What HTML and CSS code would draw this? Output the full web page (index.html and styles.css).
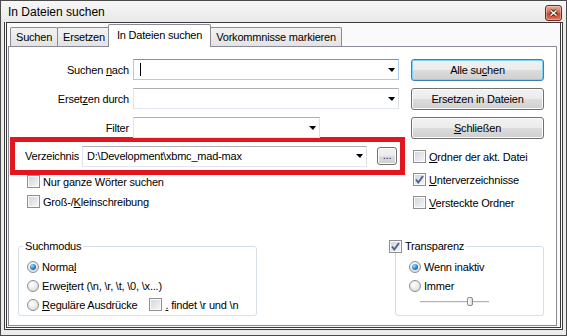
FILE: index.html
```html
<!DOCTYPE html>
<html lang="de">
<head>
    <meta charset="UTF-8">
    <title>In Dateien suchen</title>
    <link rel="stylesheet" href="styles.css">
</head>
<body>
    <div class="window">
        <div class="titlebar">
            <span class="title">In Dateien suchen</span>
            <span class="close">
                <svg width="9" height="8" viewBox="0 0 9 8">
                    <path d="M1.5 1.5 L7.5 6.5 M7.5 1.5 L1.5 6.5" stroke="#4a1d12" stroke-width="3.4"/>
                    <path d="M1.5 1.5 L7.5 6.5 M7.5 1.5 L1.5 6.5" stroke="#fff" stroke-width="1.6"/>
                </svg>
            </span>
        </div>
        <div class="client">
            <div class="tabs">
                <div class="tab">Suchen</div>
                <div class="tab">Ersetzen</div>
                <div class="tab active">In Dateien suchen</div>
                <div class="tab">Vorkommnisse markieren</div>
            </div>
            <div class="panel">
                <div class="top">
                    <div class="left">
                        <div class="fields">
                            <label>Suchen <u>n</u>ach</label>
                            <div class="combo focus"><span class="caret"></span><span class="arrow"></span></div>
                            <label>Erset<u>z</u>en durch</label>
                            <div class="combo"><span class="arrow"></span></div>
                            <label>Filter</label>
                            <div class="combo short"><span class="arrow"></span></div>
                        </div>
                        <!-- rote Markierung -->
                        <div class="marked">
                            <label class="dir-label">Verzeichnis</label>
                            <div class="combo dir"><span>D:\Development\xbmc_mad-max</span><span class="arrow"></span></div>
                            <span class="btn dots">...</span>
                        </div>
                        <div class="checks">
                            <div class="check-row"><span class="box"></span><span>Nur <u>g</u>anze Wörter suchen</span></div>
                            <div class="check-row"><span class="box"></span><span>Groß-/<u>K</u>leinschreibung</span></div>
                        </div>
                    </div>
                    <div class="right">
                        <div class="buttons">
                            <span class="btn default"><span>Alle su<u>c</u>hen</span></span>
                            <span class="btn">Ersetzen in Dateien</span>
                            <span class="btn"><span><u>S</u>chließen</span></span>
                        </div>
                        <div class="checks">
                            <div class="check-row"><span class="box"></span><span><u>O</u>rdner der akt. Datei</span></div>
                            <div class="check-row"><span class="box checked"><svg width="11" height="11" viewBox="0 0 11 11"><path d="M2 5.5 L4.3 8.5 L9 2" fill="none" stroke="#4c5f93" stroke-width="1.9"/></svg></span><span><u>U</u>nterverzeichnisse</span></div>
                            <div class="check-row"><span class="box"></span><span><u>V</u>ersteckte Ordner</span></div>
                        </div>
                    </div>
                </div>
                <div class="groups">
                    <fieldset class="group mode">
                        <legend>Suchmodus</legend>
                        <div class="opt"><span class="radio on"></span><span>Norma<u>l</u></span></div>
                        <div class="opt"><span class="radio"></span><span>Erwe<u>i</u>tert (\n, \r, \t, \0, \x...)</span></div>
                        <div class="opt"><span class="radio"></span><span><u>R</u>eguläre Ausdrücke</span><span class="box dotall"></span><span><u>.</u> findet \r und \n</span></div>
                    </fieldset>
                    <fieldset class="group trans">
                        <legend><span class="box checked"><svg width="11" height="11" viewBox="0 0 11 11"><path d="M2 5.5 L4.3 8.5 L9 2" fill="none" stroke="#4c5f93" stroke-width="1.9"/></svg></span><span>Transparenz</span></legend>
                        <div class="opt"><span class="radio on"></span><span>Wenn inaktiv</span></div>
                        <div class="opt"><span class="radio"></span><span>Immer</span></div>
                        <div class="slider">
                            <span class="track" style="width: 47px;"></span>
                            <span class="thumb"></span>
                            <span class="track" style="width: 16px;"></span>
                        </div>
                    </fieldset>
                </div>
            </div>
        </div>
    </div>
</body>
</html>
```

FILE: styles.css
```css
* {
    box-sizing: border-box;
}

body {
    margin: 0;
    font-family: "Liberation Sans", Arial, sans-serif;
    font-size: 11px;
    letter-spacing: -0.2px;
    color: #000;
}

.window {
    width: 567px;
    height: 336px;
    border: 1px solid #4a4a4a;
    background: #ececec;
    display: flex;
    flex-direction: column;
}

/* Titelleiste */
.titlebar {
    height: 21px;
    display: flex;
    align-items: flex-start;
    background: linear-gradient(#f7f7f7, #e9e9e9);
}

.title {
    flex: 1;
    padding: 2px 0 0 7px;
    font-size: 12px;
    line-height: 19px;
    letter-spacing: 0;
}

.close {
    width: 17px;
    height: 16px;
    margin: 4px 4px 0 0;
    border: 1px solid #6b2a1e;
    border-radius: 3px;
    background: linear-gradient(#eba998, #d86e55 45%, #c7452a 55%, #d97a5c);
    box-shadow: inset 0 0 0 1px rgba(255, 255, 255, 0.35);
    display: flex;
    align-items: center;
    justify-content: center;
}

.client {
    flex: 1;
    margin: 0 3px 5px;
    border-top: 1px solid #3a3a3a;
    border-left: 3px double #3a3a3a;
    border-right: 3px double #3a3a3a;
    border-bottom: 3px double #3a3a3a;
    background: #fafafa;
    display: flex;
    flex-direction: column;
}

/* Reiter */
.tabs {
    height: 23px;
    display: flex;
    align-items: flex-end;
    padding-left: 3px;
}

.tab {
    height: 19px;
    line-height: 18px;
    padding: 0 5px;
    margin-right: -1px;
    border: 1px solid #898c95;
    border-bottom: none;
    border-radius: 2px 2px 0 0;
    background: linear-gradient(#f3f3f3, #e3e3e3);
}

.tab.active {
    height: 23px;
    line-height: 21px;
    margin: 0 -1px -1px -2px;
    padding: 0 8px;
    background: #fff;
    position: relative;
    z-index: 1;
}

.panel {
    flex: 1;
    margin: 0 3px 1px 1px;
    border: 1px solid #898c95;
    background: #fff;
    padding: 12px 0 9px 1px;
    display: flex;
    flex-direction: column;
}

.top {
    display: flex;
    gap: 6px;
}

.left {
    width: 395px;
}

.fields {
    display: grid;
    grid-template-columns: 119px 266px;
    column-gap: 4px;
    row-gap: 8px;
    align-items: center;
}

.fields label {
    text-align: right;
}

.combo {
    height: 21px;
    border: 1px solid;
    border-color: #abadb3 #dbdfe6 #e3e9ef #e2e3ea;
    background: #fff;
    display: flex;
    align-items: center;
    padding: 0 3px 0 4px;
    white-space: nowrap;
}

.combo.focus {
    border-color: #569de5 #a8cbef #a8cbef #a8cbef;
}

.combo.short {
    width: 187px;
}

.caret {
    width: 1px;
    height: 13px;
    margin-left: 2px;
    background: #000;
}

.arrow {
    margin-left: auto;
    width: 0;
    height: 0;
    border-top: 4px solid #000;
    border-left: 4px solid transparent;
    border-right: 3px solid transparent;
}

.marked {
    margin-top: -1px;
    height: 38px;
    border: 5px solid #e3161f;
    display: flex;
    align-items: center;
    padding: 0 2px 0 10px;
}

.dir-label {
    width: 57px;
    flex: none;
}

.combo.dir {
    width: 285px;
}

.checks {
    display: flex;
    flex-direction: column;
    gap: 7px;
    padding-left: 17px;
}

.check-row {
    height: 13px;
    display: flex;
    align-items: center;
    gap: 3px;
    white-space: nowrap;
}

.box {
    width: 13px;
    height: 13px;
    flex: none;
    border: 1px solid #8e8f8f;
    background: linear-gradient(135deg, #cfd3d9, #f7f7f7);
    box-shadow: inset 0 0 0 1px #fafafa;
    display: flex;
    align-items: center;
    justify-content: center;
}

/* Schaltflächen */
.right {
    width: 133px;
}

.buttons {
    display: flex;
    flex-direction: column;
    gap: 7px;
}

.btn {
    height: 22px;
    border: 1px solid #707070;
    border-radius: 3px;
    background: linear-gradient(#f2f2f2, #ebebeb 50%, #dddddd 50%, #cfcfcf);
    box-shadow: inset 0 0 0 1px #fcfcfc;
    display: flex;
    align-items: center;
    justify-content: center;
}

.btn.default {
    border-color: #3c7fb1;
    box-shadow: inset 0 0 0 1px #7fd3f7;
}

.btn.dots {
    width: 20px;
    height: 18px;
    margin-left: 10px;
    padding-bottom: 2px;
    color: #202060;
}

.right .checks {
    margin-top: 11px;
    padding-left: 2px;
    gap: 10px;
}

/* Gruppen */
.groups {
    margin-top: auto;
    display: flex;
    justify-content: space-between;
    padding: 0 12px 0 8px;
}

.group {
    margin: 0;
    border: 1px solid #d5dfe5;
    border-radius: 3px;
    padding: 4px 0 1px 8px;
    min-width: 0;
}

.group legend {
    line-height: 13px;
    padding: 0 2px;
    margin-left: -4px;
    display: flex;
    align-items: center;
    gap: 3px;
}

.mode {
    width: 239px;
}

.trans {
    width: 149px;
    padding-left: 13px;
}

.trans legend {
    margin-left: -20px;
    padding: 0 2px 0 0;
}

.opt {
    height: 19px;
    display: flex;
    align-items: center;
    gap: 3px;
    white-space: nowrap;
}

.radio {
    width: 12px;
    height: 12px;
    flex: none;
    border-radius: 50%;
    border: 1px solid #8a8f94;
    background: radial-gradient(circle at 40% 35%, #fff, #e6e6e6 60%, #cdcdcd);
    display: flex;
    align-items: center;
    justify-content: center;
}

.radio.on::after {
    content: "";
    width: 6px;
    height: 6px;
    border-radius: 50%;
    background: radial-gradient(circle at 35% 30%, #9ad9ff, #2a80c9 55%, #0e4378);
}

.box.dotall {
    margin: 0 0 0 9px;
}

.slider {
    height: 13px;
    margin-left: 11px;
    display: flex;
    align-items: center;
}

.track {
    height: 2px;
    background: linear-gradient(#b0b0b0 50%, #f0f0f0 50%);
}

.thumb {
    width: 6px;
    height: 9px;
    border: 1px solid #8a8a8a;
    border-radius: 2px;
    background: linear-gradient(90deg, #fff, #dedede);
}
```
